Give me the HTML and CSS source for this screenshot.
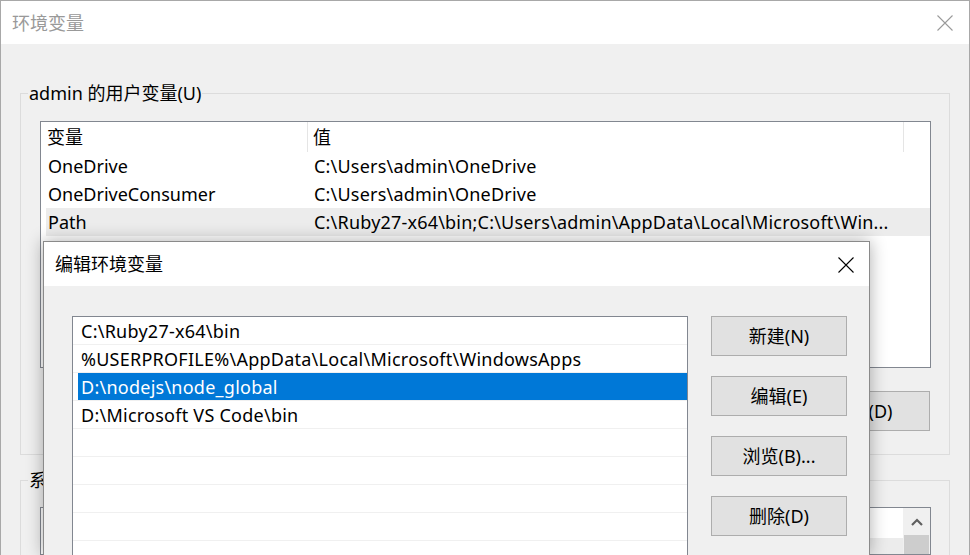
FILE: index.html
```html
<!DOCTYPE html>
<html lang="zh-CN">
<head>
<meta charset="utf-8">
<title>环境变量</title>
<link rel="stylesheet" href="styles.css">
</head>
<body>
<div class="window">
  <div class="titlebar">
    <span class="title inactive">环境变量</span>
    <svg class="close" width="16" height="16" viewBox="0 0 16 16"><path d="M0.5 0.5L15.5 15.5M15.5 0.5L0.5 15.5" stroke="#9a9a9a" stroke-width="1.1" fill="none"/></svg>
  </div>
  <div class="content">
    <div class="group">
      <div class="group-title">admin 的用户变量(U)</div>
      <div class="list list-user">
        <div class="lv-header">
          <div class="hcell c1">变量</div>
          <div class="hcell c2">值</div>
        </div>
        <div class="lv-row"><div class="cell c1">OneDrive</div><div class="cell c2">C:\Users\admin\OneDrive</div></div>
        <div class="lv-row"><div class="cell c1">OneDriveConsumer</div><div class="cell c2">C:\Users\admin\OneDrive</div></div>
        <div class="lv-row sel-gray"><div class="cell c1">Path</div><div class="cell c2">C:\Ruby27-x64\bin;C:\Users\admin\AppData\Local\Microsoft\Win...</div></div>
      </div>
      <div class="btn-row">
        <button class="btn">新建(N)...</button>
        <button class="btn">编辑(E)...</button>
        <button class="btn">删除(D)</button>
      </div>
    </div>
    <div class="group group2">
      <div class="group-title">系统变量(S)</div>
      <div class="list list-sys">
        <div class="list-main">
          <div class="lv-header">
            <div class="hcell c1">变量</div>
            <div class="hcell c2">值</div>
          </div>
          <div class="lv-row sel-gray"></div>
        </div>
        <div class="scrollbar">
          <div class="sb-up">
            <svg width="12" height="8" viewBox="0 0 12 8"><path d="M1 7L6 2L11 7" stroke="#606060" stroke-width="2.2" fill="none"/></svg>
          </div>
          <div class="sb-thumb"></div>
        </div>
      </div>
    </div>
  </div>
</div>

<div class="dialog">
  <div class="titlebar dlg-titlebar">
    <span class="title">编辑环境变量</span>
    <svg class="close dlg-close" width="16" height="16" viewBox="0 0 16 16"><path d="M0.5 0.5L15.5 15.5M15.5 0.5L0.5 15.5" stroke="#000" stroke-width="1.1" fill="none"/></svg>
  </div>
  <div class="dlg-body">
    <div class="path-list">
      <div class="p-row"><div class="p-item">C:\Ruby27-x64\bin</div></div>
      <div class="p-row"><div class="p-item">%USERPROFILE%\AppData\Local\Microsoft\WindowsApps</div></div>
      <div class="p-row"><div class="p-item selected">D:\nodejs\node_global</div></div>
      <div class="p-row"><div class="p-item">D:\Microsoft VS Code\bin</div></div>
      <div class="p-row"><div class="p-item"></div></div>
      <div class="p-row"><div class="p-item"></div></div>
      <div class="p-row"><div class="p-item"></div></div>
      <div class="p-row"><div class="p-item"></div></div>
      <div class="p-row"><div class="p-item"></div></div>
    </div>
    <div class="dlg-buttons">
      <button class="btn dbtn">新建(N)</button>
      <button class="btn dbtn">编辑(E)</button>
      <button class="btn dbtn">浏览(B)...</button>
      <button class="btn dbtn">删除(D)</button>
    </div>
  </div>
</div>
</body>
</html>
```

FILE: styles.css
```css
* { box-sizing: border-box; }

html, body {
  margin: 0;
  padding: 0;
}

body {
  width: 970px;
  height: 555px;
  overflow: hidden;
  position: relative;
  background: #f0f0f0;
  font-family: "Noto Sans", "Noto Sans CJK SC", sans-serif;
  font-size: 18px;
  color: #000;
}

.window {
  width: 970px;
  height: 555px;
  overflow: hidden;
  border: 1px solid #a8a8a8;
  border-bottom: none;
  background: #f0f0f0;
}

.titlebar {
  height: 43px;
  background: #fff;
  display: flex;
  align-items: center;
  justify-content: space-between;
  padding-left: 11px;
  padding-right: 16px;
}

.title {
  line-height: 24px;
}

.title.inactive {
  color: #999;
}

.close {
  display: block;
  margin-top: 1px;
}

.content {
  padding: 49px 19px 0 19px;
}

.group {
  border: 1px solid #dcdcdc;
  padding: 0 18px 23px 19px;
}

.group2 {
  margin-top: 25px;
}

.group-title {
  display: table;
  margin: -13px 0 0 -12px;
  padding: 0 1px;
  line-height: 24px;
  background: #f0f0f0;
}

.list {
  margin-top: 16px;
  border: 1px solid #828790;
  background: #fff;
}

.list-user {
  height: 247px;
  overflow: hidden;
}

.lv-header {
  display: grid;
  grid-template-columns: 267px 596px;
  height: 30px;
}

.hcell {
  line-height: 30px;
  border-right: 1px solid #e5e5e5;
  white-space: nowrap;
  overflow: hidden;
}

.hcell.c1 { padding-left: 6px; }
.hcell.c2 { padding-left: 5px; }

.lv-row {
  display: grid;
  grid-template-columns: 262px 595px;
  height: 28px;
  margin-left: 5px;
}

.lv-row.sel-gray {
  background: #ececec;
}

.cell {
  line-height: 28px;
  white-space: nowrap;
  overflow: hidden;
}

.cell.c1 { padding-left: 2px; }
.cell.c2 { padding-left: 6px; letter-spacing: 0.2px; }

.btn-row {
  display: flex;
  justify-content: flex-end;
  gap: 15px;
  margin-top: 23px;
  margin-right: 1px;
}

.btn {
  font: inherit;
  color: #000;
  background: #e1e1e1;
  border: 1px solid #adadad;
  width: 135px;
  height: 40px;
  padding: 1px 0 0;
  margin: 0;
  line-height: 37px;
  text-align: center;
}

.list-sys {
  margin-top: 15px;
  height: 48px;
  display: flex;
  overflow: hidden;
}

.list-main {
  width: 862px;
  overflow: hidden;
}

.scrollbar {
  width: 27px;
  background: #f0f0f0;
  display: flex;
  flex-direction: column;
}

.sb-up {
  height: 27px;
  flex: none;
  display: flex;
  align-items: center;
  justify-content: center;
  padding-top: 1px;
}

.sb-up svg { display: block; }

.sb-thumb {
  flex: 1;
  margin: 0 1px;
  background: #cdcdcd;
}

/* Edit dialog — floating window over the main one */
.dialog {
  position: absolute;
  left: 43px;
  top: 241px;
  width: 827px;
  height: 314px;
  border: 1px solid #8a8a8a;
  border-bottom: none;
  background: #f0f0f0;
  box-shadow: 0 0 16px rgba(0, 0, 0, 0.32);
}

.dlg-titlebar {
  height: 44px;
  padding-right: 15px;
}

.dlg-body {
  display: flex;
  align-items: flex-start;
  gap: 23px;
  padding: 30px 22px 0 28px;
}

.path-list {
  width: 616px;
  height: 239px;
  overflow: hidden;
  border: 1px solid #828790;
  border-bottom: none;
  background: #fff;
}

.p-row {
  height: 28px;
  border-bottom: 1px solid #f0f0f0;
}

.p-item {
  height: 27px;
  margin-left: 5px;
  padding: 1px 0 0 3px;
  line-height: 27px;
  white-space: nowrap;
  letter-spacing: 0.25px;
}

.p-item.selected {
  background: #0078d7;
  color: #fff;
}

.dlg-buttons {
  display: flex;
  flex-direction: column;
  gap: 20px;
}

.dbtn {
  width: 136px;
}
```
